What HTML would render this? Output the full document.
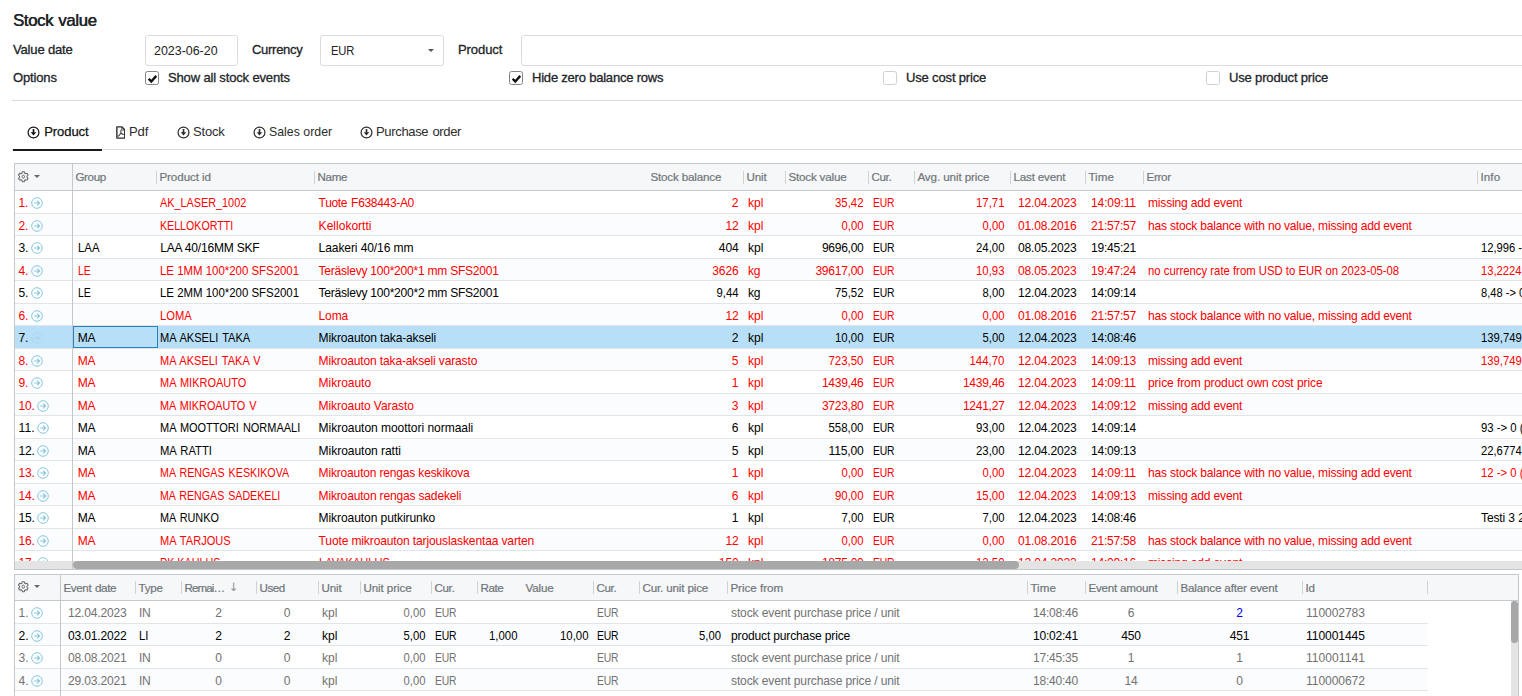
<!DOCTYPE html>
<html lang="en"><head><meta charset="utf-8"><title>Stock value</title>
<style>
html,body{margin:0;padding:0;background:#fff;}
body{width:1522px;height:696px;overflow:hidden;position:relative;font-family:"Liberation Sans",sans-serif;font-size:12.06px;color:#000;}
.abs{position:absolute;white-space:nowrap;}
.title{left:13px;top:11px;font-size:16.77px;line-height:19px;color:#212529;-webkit-text-stroke:.2px #212529;text-shadow:.3px 0 0 #212529;}
.lbl{font-size:13.04px;line-height:15px;color:#212529;-webkit-text-stroke:.3px #212529;}
.inp{border:1px solid #dcdcdc;border-radius:3px;box-sizing:border-box;height:31px;top:35px;background:#fff;}
.inp span{position:absolute;left:8.4px;top:7px;font-size:13.04px;line-height:15px;color:#222;}
.cb{width:14px;height:14px;box-sizing:border-box;border:1px solid #858585;border-radius:2.5px;background:#fff;top:71px;}
.cb.off{border-color:#d0d0d0;}
.cb svg{position:absolute;left:.5px;top:.5px;width:11.2px;height:11.2px;}
.hr{left:12px;right:0;top:100px;height:1px;background:#dcdcdc;}
.tabline{left:12px;right:0;top:149px;height:1px;background:#dcdcdc;}
.tabact{left:13px;width:89px;top:149px;height:2px;background:#1a1a1a;}
.tab{top:123.8px;font-size:13.04px;line-height:15px;color:#2c2c2c;}
.tab.on{color:#111;-webkit-text-stroke:.25px #111;}
.ti{position:absolute;width:13px;height:13px;top:1.9px;}
.tp{position:absolute;width:9.6px;height:13px;top:1.9px;}
.grid{border:1px solid #c3c8cc;box-sizing:border-box;overflow:hidden;background:#fff;}
.gh{left:0;top:0;right:0;background:#f6f7f8;border-bottom:1px solid #c3c8cc;}
.hc{top:0;font-size:11.64px;color:#6f757a;-webkit-text-stroke:.2px #6f757a;}
.sep{width:1px;height:13px;background:#cfd3d7;}
.row{left:0;right:0;height:22.5px;box-sizing:border-box;border-bottom:1px solid #e2e5e8;}
.row.alt{background:#fbfcfe;}
.row.sel{background:#b8dff8;}
.c{top:1.2px;height:21px;line-height:22px;}
.red{color:#ff0000;}
.gray{color:#727272;}
.go{position:absolute;width:12px;height:12px;top:6.4px;color:#86c6dc;}
.gear{position:absolute;width:12.6px;height:13.4px;}
.v0{top:0;width:1px;background:#c3c8cc;}
</style></head>
<body>
<div class="abs title" style="letter-spacing:-0.364px;word-spacing:0.88px;">Stock value</div>
<div class="abs lbl" style="left:13px;top:41.75px;letter-spacing:-0.18px;">Value date</div>
<div class="abs inp" style="left:145px;width:93px"><span style="transform:scaleX(0.954);transform-origin:0 0;">2023-06-20</span></div>
<div class="abs lbl" style="left:252px;top:41.75px;letter-spacing:-0.295px;">Currency</div>
<div class="abs inp" style="left:320px;width:124px"><span style="left:10px;transform:scaleX(0.86);transform-origin:0 0;letter-spacing:-0.221px;">EUR</span><i class="abs" style="left:107px;top:13px;border:3.5px solid transparent;border-top:3.5px solid #555;border-bottom:0;"></i></div>
<div class="abs lbl" style="left:458px;top:41.75px;letter-spacing:-0.083px;">Product</div>
<div class="abs inp" style="left:521px;width:1020px"></div>
<div class="abs lbl" style="left:13px;top:69.75px;letter-spacing:-0.161px;">Options</div>
<div class="abs cb" style="left:145px"><svg viewBox="0 0 11 11"><path d="M1.6 5.7l2.600 2.600 4.900-5.500" fill="none" stroke="#111" stroke-width="2.3"/></svg></div>
<div class="abs lbl" style="left:168px;top:69.75px;letter-spacing:-0.167px;">Show all stock events</div>
<div class="abs cb" style="left:509px"><svg viewBox="0 0 11 11"><path d="M1.6 5.7l2.600 2.600 4.900-5.500" fill="none" stroke="#111" stroke-width="2.3"/></svg></div>
<div class="abs lbl" style="left:532px;top:69.75px;letter-spacing:-0.224px;">Hide zero balance rows</div>
<div class="abs cb off" style="left:883px"></div>
<div class="abs lbl" style="left:906px;top:69.75px;letter-spacing:-0.17px;">Use cost price</div>
<div class="abs cb off" style="left:1206px"></div>
<div class="abs lbl" style="left:1229px;top:69.75px;letter-spacing:-0.174px;">Use product price</div>
<div class="abs hr"></div>
<div class="abs tabline"></div><div class="abs tabact"></div>
<div class="abs tab on" style="left:26.8px"><svg class="ti" viewBox="0 0 14 14"><circle cx="7" cy="7" r="5.85" fill="none" stroke="currentColor" stroke-width="1.3"/><path d="M7 3.3v4.500" fill="none" stroke="currentColor" stroke-width="1.8"/><path d="M4 6.700L7 10.100l3-3.400z" fill="currentColor"/></svg><span style="position:absolute;left:17.4px;letter-spacing:-0.083px;">Product</span></div>
<div class="abs tab" style="left:115.6px"><svg class="tp" viewBox="0 0 10 13.5"><path d="M.9.900h5.300l2.900 2.900v8.800H.9z" fill="none" stroke="currentColor" stroke-width="1.45" stroke-linejoin="round"/><path d="M6 1.200v3h3" fill="none" stroke="currentColor" stroke-width=".8"/><path d="M5.100 4.400v3.300M5.100 7.500L2.500 10.600M5.100 7.500l2.600 1.400" fill="none" stroke="currentColor" stroke-width="1.050" stroke-linecap="round"/></svg><span style="position:absolute;left:13.4px;letter-spacing:-0.068px;">Pdf</span></div>
<div class="abs tab" style="left:176.8px"><svg class="ti" viewBox="0 0 14 14"><circle cx="7" cy="7" r="5.85" fill="none" stroke="currentColor" stroke-width="1.3"/><path d="M7 3.3v4.500" fill="none" stroke="currentColor" stroke-width="1.8"/><path d="M4 6.700L7 10.100l3-3.400z" fill="currentColor"/></svg><span style="position:absolute;left:16.2px;letter-spacing:-0.191px;">Stock</span></div>
<div class="abs tab" style="left:252.8px"><svg class="ti" viewBox="0 0 14 14"><circle cx="7" cy="7" r="5.85" fill="none" stroke="currentColor" stroke-width="1.3"/><path d="M7 3.3v4.500" fill="none" stroke="currentColor" stroke-width="1.8"/><path d="M4 6.700L7 10.100l3-3.400z" fill="currentColor"/></svg><span style="position:absolute;left:16.2px;transform:scaleX(0.947);transform-origin:0 0;">Sales order</span></div>
<div class="abs tab" style="left:359.8px"><svg class="ti" viewBox="0 0 14 14"><circle cx="7" cy="7" r="5.85" fill="none" stroke="currentColor" stroke-width="1.3"/><path d="M7 3.3v4.500" fill="none" stroke="currentColor" stroke-width="1.8"/><path d="M4 6.700L7 10.100l3-3.400z" fill="currentColor"/></svg><span style="position:absolute;left:16.2px;letter-spacing:-0.349px;word-spacing:0.89px;">Purchase order</span></div>
<div class="abs grid" id="g1" style="left:14px;top:163px;width:1540px;height:407px">
<div class="abs gh" style="height:26px">
<svg class="gear" style="left:2.4px;top:5.8px" viewBox="0 0 24 24"><path fill="none" stroke="#6a6a6a" stroke-width="2" stroke-linejoin="round" d="M10 2.5h4l.6 2.8 1.9 1.1 2.7-.9 2 3.5-2.1 1.9v2.2l2.1 1.9-2 3.5-2.7-.9-1.9 1.1-.6 2.8h-4l-.6-2.8-1.9-1.1-2.7.9-2-3.5 2.1-1.9v-2.2L2.8 9l2-3.5 2.7.9 1.9-1.1z"/><ellipse cx="12" cy="12" rx="2.300" ry="3" fill="none" stroke="#6a6a6a" stroke-width="1.900"/></svg><i class="abs" style="left:18.5px;top:10.7px;border:3.5px solid transparent;border-top:3.5px solid #686868;border-bottom:0;"></i>
<div class="abs hc" style="left:60.4px;height:26px;line-height:26px;letter-spacing:-0.369px;">Group</div>
<i class="abs sep" style="left:141px;top:7px"></i>
<div class="abs hc" style="left:144.4px;height:26px;line-height:26px;letter-spacing:-0.072px;">Product id</div>
<i class="abs sep" style="left:299px;top:7px"></i>
<div class="abs hc" style="left:302.4px;height:26px;line-height:26px;letter-spacing:-0.285px;">Name</div>
<div class="abs hc" style="left:635.4px;height:26px;line-height:26px;letter-spacing:-0.169px;">Stock balance</div>
<i class="abs sep" style="left:728px;top:7px"></i>
<div class="abs hc" style="left:731.4px;height:26px;line-height:26px;letter-spacing:-0.109px;">Unit</div>
<i class="abs sep" style="left:770px;top:7px"></i>
<div class="abs hc" style="left:773.4px;height:26px;line-height:26px;letter-spacing:-0.186px;">Stock value</div>
<i class="abs sep" style="left:853px;top:7px"></i>
<div class="abs hc" style="left:856.4px;height:26px;line-height:26px;letter-spacing:-0.348px;">Cur.</div>
<i class="abs sep" style="left:899px;top:7px"></i>
<div class="abs hc" style="left:902.4px;height:26px;line-height:26px;letter-spacing:-0.097px;">Avg. unit price</div>
<i class="abs sep" style="left:995px;top:7px"></i>
<div class="abs hc" style="left:998.4px;height:26px;line-height:26px;letter-spacing:-0.167px;">Last event</div>
<i class="abs sep" style="left:1070px;top:7px"></i>
<div class="abs hc" style="left:1073.4px;height:26px;line-height:26px;letter-spacing:0.039px;">Time</div>
<i class="abs sep" style="left:1128px;top:7px"></i>
<div class="abs hc" style="left:1131.4px;height:26px;line-height:26px;letter-spacing:-0.263px;">Error</div>
<i class="abs sep" style="left:1462px;top:7px"></i>
<div class="abs hc" style="left:1465.4px;height:26px;line-height:26px;letter-spacing:0.105px;">Info</div>
</div>
<div class="abs row red" style="top:27.0px">
<div class="abs c" style="left:3.6px;letter-spacing:-0.219px;">1.</div>
<svg class="go" style="left:15.9px" viewBox="0 0 12 12"><circle cx="6" cy="6" r="5.3" fill="none" stroke="currentColor" stroke-width="1"/><path d="M3.2 6h5.2M6.2 3.7L8.5 6 6.2 8.3" fill="none" stroke="currentColor" stroke-width="1.15"/></svg>
<div class="abs c" style="left:145.2px;transform:scaleX(0.9);transform-origin:0 0;">AK_LASER_1002</div>
<div class="abs c" style="left:303.6px;letter-spacing:-0.346px;word-spacing:0.89px;">Tuote F638443-A0</div>
<div class="abs c" style="left:632px;width:91.5px;text-align:right;">2</div>
<div class="abs c" style="left:733px;letter-spacing:-0.042px;">kpl</div>
<div class="abs c" style="left:770px;width:78.5px;text-align:right;transform:scaleX(0.944);transform-origin:100% 0;">35,42</div>
<div class="abs c" style="left:858px;transform:scaleX(0.86);transform-origin:0 0;letter-spacing:-0.206px;">EUR</div>
<div class="abs c" style="left:899px;width:90.5px;text-align:right;transform:scaleX(0.944);transform-origin:100% 0;">17,71</div>
<div class="abs c" style="left:1003px;letter-spacing:-0.181px;">12.04.2023</div>
<div class="abs c" style="left:1076px;letter-spacing:-0.137px;">14:09:11</div>
<div class="abs c" style="left:1133px;letter-spacing:-0.173px;">missing add event</div>
</div>
<div class="abs row alt red" style="top:49.5px">
<div class="abs c" style="left:3.6px;letter-spacing:-0.219px;">2.</div>
<svg class="go" style="left:15.9px" viewBox="0 0 12 12"><circle cx="6" cy="6" r="5.3" fill="none" stroke="currentColor" stroke-width="1"/><path d="M3.2 6h5.2M6.2 3.7L8.5 6 6.2 8.3" fill="none" stroke="currentColor" stroke-width="1.15"/></svg>
<div class="abs c" style="left:145.2px;transform:scaleX(0.883);transform-origin:0 0;">KELLOKORTTI</div>
<div class="abs c" style="left:303.6px;">Kellokortti</div>
<div class="abs c" style="left:632px;width:91.5px;text-align:right;letter-spacing:-0.156px;">12</div>
<div class="abs c" style="left:733px;letter-spacing:-0.042px;">kpl</div>
<div class="abs c" style="left:770px;width:78.5px;text-align:right;transform:scaleX(0.935);transform-origin:100% 0;">0,00</div>
<div class="abs c" style="left:858px;transform:scaleX(0.86);transform-origin:0 0;letter-spacing:-0.206px;">EUR</div>
<div class="abs c" style="left:899px;width:90.5px;text-align:right;transform:scaleX(0.935);transform-origin:100% 0;">0,00</div>
<div class="abs c" style="left:1003px;letter-spacing:-0.181px;">01.08.2016</div>
<div class="abs c" style="left:1076px;letter-spacing:-0.25px;">21:57:57</div>
<div class="abs c" style="left:1133px;letter-spacing:-0.203px;">has stock balance with no value, missing add event</div>
</div>
<div class="abs row" style="top:72.0px">
<div class="abs c" style="left:3.6px;letter-spacing:-0.219px;">3.</div>
<svg class="go" style="left:15.9px" viewBox="0 0 12 12"><circle cx="6" cy="6" r="5.3" fill="none" stroke="currentColor" stroke-width="1"/><path d="M3.2 6h5.2M6.2 3.7L8.5 6 6.2 8.3" fill="none" stroke="currentColor" stroke-width="1.15"/></svg>
<div class="abs c" style="left:62.7px;transform:scaleX(0.947);transform-origin:0 0;">LAA</div>
<div class="abs c" style="left:145.2px;letter-spacing:-0.21px;">LAA 40/16MM SKF</div>
<div class="abs c" style="left:303.6px;letter-spacing:-0.1px;">Laakeri 40/16 mm</div>
<div class="abs c" style="left:632px;width:91.5px;text-align:right;letter-spacing:-0.156px;">404</div>
<div class="abs c" style="left:733px;letter-spacing:-0.042px;">kpl</div>
<div class="abs c" style="left:770px;width:78.5px;text-align:right;letter-spacing:-0.286px;">9696,00</div>
<div class="abs c" style="left:858px;transform:scaleX(0.86);transform-origin:0 0;letter-spacing:-0.206px;">EUR</div>
<div class="abs c" style="left:899px;width:90.5px;text-align:right;transform:scaleX(0.944);transform-origin:100% 0;">24,00</div>
<div class="abs c" style="left:1003px;letter-spacing:-0.181px;">08.05.2023</div>
<div class="abs c" style="left:1076px;letter-spacing:-0.25px;">19:45:21</div>
<div class="abs c" style="left:1466px;transform:scaleX(0.929);transform-origin:0 0;">12,996 -&gt; 24</div>
</div>
<div class="abs row alt red" style="top:94.5px">
<div class="abs c" style="left:3.6px;letter-spacing:-0.219px;">4.</div>
<svg class="go" style="left:15.9px" viewBox="0 0 12 12"><circle cx="6" cy="6" r="5.3" fill="none" stroke="currentColor" stroke-width="1"/><path d="M3.2 6h5.2M6.2 3.7L8.5 6 6.2 8.3" fill="none" stroke="currentColor" stroke-width="1.15"/></svg>
<div class="abs c" style="left:62.7px;transform:scaleX(0.874);transform-origin:0 0;">LE</div>
<div class="abs c" style="left:145.2px;transform:scaleX(0.948);transform-origin:0 0;">LE 1MM 100*200 SFS2001</div>
<div class="abs c" style="left:303.6px;letter-spacing:-0.249px;">Teräslevy 100*200*1 mm SFS2001</div>
<div class="abs c" style="left:632px;width:91.5px;text-align:right;letter-spacing:-0.16px;">3626</div>
<div class="abs c" style="left:733px;letter-spacing:-0.203px;">kg</div>
<div class="abs c" style="left:770px;width:78.5px;text-align:right;letter-spacing:-0.27px;">39617,00</div>
<div class="abs c" style="left:858px;transform:scaleX(0.86);transform-origin:0 0;letter-spacing:-0.206px;">EUR</div>
<div class="abs c" style="left:899px;width:90.5px;text-align:right;transform:scaleX(0.944);transform-origin:100% 0;">10,93</div>
<div class="abs c" style="left:1003px;letter-spacing:-0.181px;">08.05.2023</div>
<div class="abs c" style="left:1076px;letter-spacing:-0.25px;">19:47:24</div>
<div class="abs c" style="left:1133px;transform:scaleX(0.94);transform-origin:0 0;">no currency rate from USD to EUR on 2023-05-08</div>
<div class="abs c" style="left:1466px;transform:scaleX(0.931);transform-origin:0 0;">13,2224 -&gt; 10,93</div>
</div>
<div class="abs row" style="top:117.0px">
<div class="abs c" style="left:3.6px;letter-spacing:-0.219px;">5.</div>
<svg class="go" style="left:15.9px" viewBox="0 0 12 12"><circle cx="6" cy="6" r="5.3" fill="none" stroke="currentColor" stroke-width="1"/><path d="M3.2 6h5.2M6.2 3.7L8.5 6 6.2 8.3" fill="none" stroke="currentColor" stroke-width="1.15"/></svg>
<div class="abs c" style="left:62.7px;transform:scaleX(0.874);transform-origin:0 0;">LE</div>
<div class="abs c" style="left:145.2px;transform:scaleX(0.948);transform-origin:0 0;">LE 2MM 100*200 SFS2001</div>
<div class="abs c" style="left:303.6px;letter-spacing:-0.249px;">Teräslevy 100*200*2 mm SFS2001</div>
<div class="abs c" style="left:632px;width:91.5px;text-align:right;transform:scaleX(0.935);transform-origin:100% 0;">9,44</div>
<div class="abs c" style="left:733px;letter-spacing:-0.203px;">kg</div>
<div class="abs c" style="left:770px;width:78.5px;text-align:right;transform:scaleX(0.944);transform-origin:100% 0;">75,52</div>
<div class="abs c" style="left:858px;transform:scaleX(0.86);transform-origin:0 0;letter-spacing:-0.206px;">EUR</div>
<div class="abs c" style="left:899px;width:90.5px;text-align:right;transform:scaleX(0.935);transform-origin:100% 0;">8,00</div>
<div class="abs c" style="left:1003px;letter-spacing:-0.181px;">12.04.2023</div>
<div class="abs c" style="left:1076px;letter-spacing:-0.25px;">14:09:14</div>
<div class="abs c" style="left:1466px;transform:scaleX(0.925);transform-origin:0 0;">8,48 -&gt; 0 (8)</div>
</div>
<div class="abs row alt red" style="top:139.5px">
<div class="abs c" style="left:3.6px;letter-spacing:-0.219px;">6.</div>
<svg class="go" style="left:15.9px" viewBox="0 0 12 12"><circle cx="6" cy="6" r="5.3" fill="none" stroke="currentColor" stroke-width="1"/><path d="M3.2 6h5.2M6.2 3.7L8.5 6 6.2 8.3" fill="none" stroke="currentColor" stroke-width="1.15"/></svg>
<div class="abs c" style="left:145.2px;transform:scaleX(0.93);transform-origin:0 0;">LOMA</div>
<div class="abs c" style="left:303.6px;letter-spacing:-0.172px;">Loma</div>
<div class="abs c" style="left:632px;width:91.5px;text-align:right;letter-spacing:-0.156px;">12</div>
<div class="abs c" style="left:733px;letter-spacing:-0.042px;">kpl</div>
<div class="abs c" style="left:770px;width:78.5px;text-align:right;transform:scaleX(0.935);transform-origin:100% 0;">0,00</div>
<div class="abs c" style="left:858px;transform:scaleX(0.86);transform-origin:0 0;letter-spacing:-0.206px;">EUR</div>
<div class="abs c" style="left:899px;width:90.5px;text-align:right;transform:scaleX(0.935);transform-origin:100% 0;">0,00</div>
<div class="abs c" style="left:1003px;letter-spacing:-0.181px;">01.08.2016</div>
<div class="abs c" style="left:1076px;letter-spacing:-0.25px;">21:57:57</div>
<div class="abs c" style="left:1133px;letter-spacing:-0.203px;">has stock balance with no value, missing add event</div>
</div>
<div class="abs row sel" style="top:162.0px">
<div class="abs c" style="left:3.6px;letter-spacing:-0.219px;">7.</div>
<svg class="go" style="left:15.9px;opacity:.3" viewBox="0 0 12 12"><circle cx="6" cy="6" r="5.3" fill="none" stroke="currentColor" stroke-width="1"/><path d="M3.2 6h5.2M6.2 3.7L8.5 6 6.2 8.3" fill="none" stroke="currentColor" stroke-width="1.15"/></svg>
<div class="abs c" style="left:62.7px;letter-spacing:-0.109px;">MA</div>
<div class="abs c" style="left:145.2px;transform:scaleX(0.919);transform-origin:0 0;word-spacing:1.1px;">MA AKSELI TAKA</div>
<div class="abs c" style="left:303.6px;letter-spacing:-0.141px;">Mikroauton taka-akseli</div>
<div class="abs c" style="left:632px;width:91.5px;text-align:right;">2</div>
<div class="abs c" style="left:733px;letter-spacing:-0.042px;">kpl</div>
<div class="abs c" style="left:770px;width:78.5px;text-align:right;transform:scaleX(0.944);transform-origin:100% 0;">10,00</div>
<div class="abs c" style="left:858px;transform:scaleX(0.86);transform-origin:0 0;letter-spacing:-0.206px;">EUR</div>
<div class="abs c" style="left:899px;width:90.5px;text-align:right;transform:scaleX(0.935);transform-origin:100% 0;">5,00</div>
<div class="abs c" style="left:1003px;letter-spacing:-0.181px;">12.04.2023</div>
<div class="abs c" style="left:1076px;letter-spacing:-0.25px;">14:08:46</div>
<div class="abs c" style="left:1466px;transform:scaleX(0.933);transform-origin:0 0;">139,7495 -&gt; 5</div>
<i class="abs" style="left:58px;top:0;width:84.5px;height:21.5px;box-sizing:border-box;border:1px solid #2a7fc0"></i>
</div>
<div class="abs row alt red" style="top:184.5px">
<div class="abs c" style="left:3.6px;letter-spacing:-0.219px;">8.</div>
<svg class="go" style="left:15.9px" viewBox="0 0 12 12"><circle cx="6" cy="6" r="5.3" fill="none" stroke="currentColor" stroke-width="1"/><path d="M3.2 6h5.2M6.2 3.7L8.5 6 6.2 8.3" fill="none" stroke="currentColor" stroke-width="1.15"/></svg>
<div class="abs c" style="left:62.7px;letter-spacing:-0.109px;">MA</div>
<div class="abs c" style="left:145.2px;transform:scaleX(0.914);transform-origin:0 0;word-spacing:1.1px;">MA AKSELI TAKA V</div>
<div class="abs c" style="left:303.6px;letter-spacing:-0.159px;">Mikroauton taka-akseli varasto</div>
<div class="abs c" style="left:632px;width:91.5px;text-align:right;">5</div>
<div class="abs c" style="left:733px;letter-spacing:-0.042px;">kpl</div>
<div class="abs c" style="left:770px;width:78.5px;text-align:right;transform:scaleX(0.95);transform-origin:100% 0;">723,50</div>
<div class="abs c" style="left:858px;transform:scaleX(0.86);transform-origin:0 0;letter-spacing:-0.206px;">EUR</div>
<div class="abs c" style="left:899px;width:90.5px;text-align:right;transform:scaleX(0.95);transform-origin:100% 0;">144,70</div>
<div class="abs c" style="left:1003px;letter-spacing:-0.181px;">12.04.2023</div>
<div class="abs c" style="left:1076px;letter-spacing:-0.25px;">14:09:13</div>
<div class="abs c" style="left:1133px;letter-spacing:-0.173px;">missing add event</div>
<div class="abs c" style="left:1466px;transform:scaleX(0.934);transform-origin:0 0;">139,7495 -&gt; 144,7</div>
</div>
<div class="abs row red" style="top:207.0px">
<div class="abs c" style="left:3.6px;letter-spacing:-0.219px;">9.</div>
<svg class="go" style="left:15.9px" viewBox="0 0 12 12"><circle cx="6" cy="6" r="5.3" fill="none" stroke="currentColor" stroke-width="1"/><path d="M3.2 6h5.2M6.2 3.7L8.5 6 6.2 8.3" fill="none" stroke="currentColor" stroke-width="1.15"/></svg>
<div class="abs c" style="left:62.7px;letter-spacing:-0.109px;">MA</div>
<div class="abs c" style="left:145.2px;transform:scaleX(0.912);transform-origin:0 0;word-spacing:1.1px;">MA MIKROAUTO</div>
<div class="abs c" style="left:303.6px;letter-spacing:-0.05px;">Mikroauto</div>
<div class="abs c" style="left:632px;width:91.5px;text-align:right;">1</div>
<div class="abs c" style="left:733px;letter-spacing:-0.042px;">kpl</div>
<div class="abs c" style="left:770px;width:78.5px;text-align:right;letter-spacing:-0.286px;">1439,46</div>
<div class="abs c" style="left:858px;transform:scaleX(0.86);transform-origin:0 0;letter-spacing:-0.206px;">EUR</div>
<div class="abs c" style="left:899px;width:90.5px;text-align:right;letter-spacing:-0.286px;">1439,46</div>
<div class="abs c" style="left:1003px;letter-spacing:-0.181px;">12.04.2023</div>
<div class="abs c" style="left:1076px;letter-spacing:-0.137px;">14:09:11</div>
<div class="abs c" style="left:1133px;letter-spacing:-0.087px;">price from product own cost price</div>
</div>
<div class="abs row alt red" style="top:229.5px">
<div class="abs c" style="left:3.6px;letter-spacing:-0.198px;">10.</div>
<svg class="go" style="left:22.4px" viewBox="0 0 12 12"><circle cx="6" cy="6" r="5.3" fill="none" stroke="currentColor" stroke-width="1"/><path d="M3.2 6h5.2M6.2 3.7L8.5 6 6.2 8.3" fill="none" stroke="currentColor" stroke-width="1.15"/></svg>
<div class="abs c" style="left:62.7px;letter-spacing:-0.109px;">MA</div>
<div class="abs c" style="left:145.2px;transform:scaleX(0.902);transform-origin:0 0;word-spacing:1.1px;">MA MIKROAUTO V</div>
<div class="abs c" style="left:303.6px;letter-spacing:-0.097px;">Mikroauto Varasto</div>
<div class="abs c" style="left:632px;width:91.5px;text-align:right;">3</div>
<div class="abs c" style="left:733px;letter-spacing:-0.042px;">kpl</div>
<div class="abs c" style="left:770px;width:78.5px;text-align:right;letter-spacing:-0.286px;">3723,80</div>
<div class="abs c" style="left:858px;transform:scaleX(0.86);transform-origin:0 0;letter-spacing:-0.206px;">EUR</div>
<div class="abs c" style="left:899px;width:90.5px;text-align:right;letter-spacing:-0.286px;">1241,27</div>
<div class="abs c" style="left:1003px;letter-spacing:-0.181px;">12.04.2023</div>
<div class="abs c" style="left:1076px;letter-spacing:-0.25px;">14:09:12</div>
<div class="abs c" style="left:1133px;letter-spacing:-0.173px;">missing add event</div>
</div>
<div class="abs row" style="top:252.0px">
<div class="abs c" style="left:3.6px;letter-spacing:0.099px;">11.</div>
<svg class="go" style="left:22.4px" viewBox="0 0 12 12"><circle cx="6" cy="6" r="5.3" fill="none" stroke="currentColor" stroke-width="1"/><path d="M3.2 6h5.2M6.2 3.7L8.5 6 6.2 8.3" fill="none" stroke="currentColor" stroke-width="1.15"/></svg>
<div class="abs c" style="left:62.7px;letter-spacing:-0.109px;">MA</div>
<div class="abs c" style="left:145.2px;transform:scaleX(0.911);transform-origin:0 0;word-spacing:1.1px;">MA MOOTTORI NORMAALI</div>
<div class="abs c" style="left:303.6px;letter-spacing:-0.05px;">Mikroauton moottori normaali</div>
<div class="abs c" style="left:632px;width:91.5px;text-align:right;">6</div>
<div class="abs c" style="left:733px;letter-spacing:-0.042px;">kpl</div>
<div class="abs c" style="left:770px;width:78.5px;text-align:right;transform:scaleX(0.95);transform-origin:100% 0;">558,00</div>
<div class="abs c" style="left:858px;transform:scaleX(0.86);transform-origin:0 0;letter-spacing:-0.206px;">EUR</div>
<div class="abs c" style="left:899px;width:90.5px;text-align:right;transform:scaleX(0.944);transform-origin:100% 0;">93,00</div>
<div class="abs c" style="left:1003px;letter-spacing:-0.181px;">12.04.2023</div>
<div class="abs c" style="left:1076px;letter-spacing:-0.25px;">14:09:14</div>
<div class="abs c" style="left:1466px;transform:scaleX(0.938);transform-origin:0 0;">93 -&gt; 0 (93)</div>
</div>
<div class="abs row alt" style="top:274.5px">
<div class="abs c" style="left:3.6px;letter-spacing:-0.198px;">12.</div>
<svg class="go" style="left:22.4px" viewBox="0 0 12 12"><circle cx="6" cy="6" r="5.3" fill="none" stroke="currentColor" stroke-width="1"/><path d="M3.2 6h5.2M6.2 3.7L8.5 6 6.2 8.3" fill="none" stroke="currentColor" stroke-width="1.15"/></svg>
<div class="abs c" style="left:62.7px;letter-spacing:-0.109px;">MA</div>
<div class="abs c" style="left:145.2px;transform:scaleX(0.931);transform-origin:0 0;word-spacing:1.1px;">MA RATTI</div>
<div class="abs c" style="left:303.6px;letter-spacing:-0.048px;">Mikroauton ratti</div>
<div class="abs c" style="left:632px;width:91.5px;text-align:right;">5</div>
<div class="abs c" style="left:733px;letter-spacing:-0.042px;">kpl</div>
<div class="abs c" style="left:770px;width:78.5px;text-align:right;letter-spacing:-0.156px;">115,00</div>
<div class="abs c" style="left:858px;transform:scaleX(0.86);transform-origin:0 0;letter-spacing:-0.206px;">EUR</div>
<div class="abs c" style="left:899px;width:90.5px;text-align:right;transform:scaleX(0.944);transform-origin:100% 0;">23,00</div>
<div class="abs c" style="left:1003px;letter-spacing:-0.181px;">12.04.2023</div>
<div class="abs c" style="left:1076px;letter-spacing:-0.25px;">14:09:13</div>
<div class="abs c" style="left:1466px;transform:scaleX(0.933);transform-origin:0 0;">22,6774 -&gt; 23</div>
</div>
<div class="abs row red" style="top:297.0px">
<div class="abs c" style="left:3.6px;letter-spacing:-0.198px;">13.</div>
<svg class="go" style="left:22.4px" viewBox="0 0 12 12"><circle cx="6" cy="6" r="5.3" fill="none" stroke="currentColor" stroke-width="1"/><path d="M3.2 6h5.2M6.2 3.7L8.5 6 6.2 8.3" fill="none" stroke="currentColor" stroke-width="1.15"/></svg>
<div class="abs c" style="left:62.7px;letter-spacing:-0.109px;">MA</div>
<div class="abs c" style="left:145.2px;transform:scaleX(0.889);transform-origin:0 0;word-spacing:1.1px;">MA RENGAS KESKIKOVA</div>
<div class="abs c" style="left:303.6px;letter-spacing:-0.186px;">Mikroauton rengas keskikova</div>
<div class="abs c" style="left:632px;width:91.5px;text-align:right;">1</div>
<div class="abs c" style="left:733px;letter-spacing:-0.042px;">kpl</div>
<div class="abs c" style="left:770px;width:78.5px;text-align:right;transform:scaleX(0.935);transform-origin:100% 0;">0,00</div>
<div class="abs c" style="left:858px;transform:scaleX(0.86);transform-origin:0 0;letter-spacing:-0.206px;">EUR</div>
<div class="abs c" style="left:899px;width:90.5px;text-align:right;transform:scaleX(0.935);transform-origin:100% 0;">0,00</div>
<div class="abs c" style="left:1003px;letter-spacing:-0.181px;">12.04.2023</div>
<div class="abs c" style="left:1076px;letter-spacing:-0.137px;">14:09:11</div>
<div class="abs c" style="left:1133px;letter-spacing:-0.203px;">has stock balance with no value, missing add event</div>
<div class="abs c" style="left:1466px;transform:scaleX(0.938);transform-origin:0 0;">12 -&gt; 0 (12)</div>
</div>
<div class="abs row alt red" style="top:319.5px">
<div class="abs c" style="left:3.6px;letter-spacing:-0.198px;">14.</div>
<svg class="go" style="left:22.4px" viewBox="0 0 12 12"><circle cx="6" cy="6" r="5.3" fill="none" stroke="currentColor" stroke-width="1"/><path d="M3.2 6h5.2M6.2 3.7L8.5 6 6.2 8.3" fill="none" stroke="currentColor" stroke-width="1.15"/></svg>
<div class="abs c" style="left:62.7px;letter-spacing:-0.109px;">MA</div>
<div class="abs c" style="left:145.2px;transform:scaleX(0.884);transform-origin:0 0;word-spacing:1.1px;">MA RENGAS SADEKELI</div>
<div class="abs c" style="left:303.6px;letter-spacing:-0.179px;">Mikroauton rengas sadekeli</div>
<div class="abs c" style="left:632px;width:91.5px;text-align:right;">6</div>
<div class="abs c" style="left:733px;letter-spacing:-0.042px;">kpl</div>
<div class="abs c" style="left:770px;width:78.5px;text-align:right;transform:scaleX(0.944);transform-origin:100% 0;">90,00</div>
<div class="abs c" style="left:858px;transform:scaleX(0.86);transform-origin:0 0;letter-spacing:-0.206px;">EUR</div>
<div class="abs c" style="left:899px;width:90.5px;text-align:right;transform:scaleX(0.944);transform-origin:100% 0;">15,00</div>
<div class="abs c" style="left:1003px;letter-spacing:-0.181px;">12.04.2023</div>
<div class="abs c" style="left:1076px;letter-spacing:-0.25px;">14:09:13</div>
<div class="abs c" style="left:1133px;letter-spacing:-0.173px;">missing add event</div>
</div>
<div class="abs row" style="top:342.0px">
<div class="abs c" style="left:3.6px;letter-spacing:-0.198px;">15.</div>
<svg class="go" style="left:22.4px" viewBox="0 0 12 12"><circle cx="6" cy="6" r="5.3" fill="none" stroke="currentColor" stroke-width="1"/><path d="M3.2 6h5.2M6.2 3.7L8.5 6 6.2 8.3" fill="none" stroke="currentColor" stroke-width="1.15"/></svg>
<div class="abs c" style="left:62.7px;letter-spacing:-0.109px;">MA</div>
<div class="abs c" style="left:145.2px;transform:scaleX(0.901);transform-origin:0 0;word-spacing:1.1px;">MA RUNKO</div>
<div class="abs c" style="left:303.6px;letter-spacing:-0.092px;">Mikroauton putkirunko</div>
<div class="abs c" style="left:632px;width:91.5px;text-align:right;">1</div>
<div class="abs c" style="left:733px;letter-spacing:-0.042px;">kpl</div>
<div class="abs c" style="left:770px;width:78.5px;text-align:right;transform:scaleX(0.935);transform-origin:100% 0;">7,00</div>
<div class="abs c" style="left:858px;transform:scaleX(0.86);transform-origin:0 0;letter-spacing:-0.206px;">EUR</div>
<div class="abs c" style="left:899px;width:90.5px;text-align:right;transform:scaleX(0.935);transform-origin:100% 0;">7,00</div>
<div class="abs c" style="left:1003px;letter-spacing:-0.181px;">12.04.2023</div>
<div class="abs c" style="left:1076px;letter-spacing:-0.25px;">14:08:46</div>
<div class="abs c" style="left:1466px;letter-spacing:-0.129px;">Testi 3 2 1</div>
</div>
<div class="abs row alt red" style="top:364.5px">
<div class="abs c" style="left:3.6px;letter-spacing:-0.198px;">16.</div>
<svg class="go" style="left:22.4px" viewBox="0 0 12 12"><circle cx="6" cy="6" r="5.3" fill="none" stroke="currentColor" stroke-width="1"/><path d="M3.2 6h5.2M6.2 3.7L8.5 6 6.2 8.3" fill="none" stroke="currentColor" stroke-width="1.15"/></svg>
<div class="abs c" style="left:62.7px;letter-spacing:-0.109px;">MA</div>
<div class="abs c" style="left:145.2px;transform:scaleX(0.918);transform-origin:0 0;word-spacing:1.1px;">MA TARJOUS</div>
<div class="abs c" style="left:303.6px;letter-spacing:-0.142px;">Tuote mikroauton tarjouslaskentaa varten</div>
<div class="abs c" style="left:632px;width:91.5px;text-align:right;letter-spacing:-0.156px;">12</div>
<div class="abs c" style="left:733px;letter-spacing:-0.042px;">kpl</div>
<div class="abs c" style="left:770px;width:78.5px;text-align:right;transform:scaleX(0.935);transform-origin:100% 0;">0,00</div>
<div class="abs c" style="left:858px;transform:scaleX(0.86);transform-origin:0 0;letter-spacing:-0.206px;">EUR</div>
<div class="abs c" style="left:899px;width:90.5px;text-align:right;transform:scaleX(0.935);transform-origin:100% 0;">0,00</div>
<div class="abs c" style="left:1003px;letter-spacing:-0.181px;">01.08.2016</div>
<div class="abs c" style="left:1076px;letter-spacing:-0.25px;">21:57:58</div>
<div class="abs c" style="left:1133px;letter-spacing:-0.203px;">has stock balance with no value, missing add event</div>
</div>
<div class="abs row red" style="top:387.0px">
<div class="abs c" style="left:3.6px;letter-spacing:-0.198px;">17.</div>
<svg class="go" style="left:22.4px" viewBox="0 0 12 12"><circle cx="6" cy="6" r="5.3" fill="none" stroke="currentColor" stroke-width="1"/><path d="M3.2 6h5.2M6.2 3.7L8.5 6 6.2 8.3" fill="none" stroke="currentColor" stroke-width="1.15"/></svg>
<div class="abs c" style="left:145.2px;transform:scaleX(0.892);transform-origin:0 0;">PK KAULUS</div>
<div class="abs c" style="left:303.6px;transform:scaleX(0.917);transform-origin:0 0;">LAVAKAULUS</div>
<div class="abs c" style="left:632px;width:91.5px;text-align:right;letter-spacing:-0.156px;">150</div>
<div class="abs c" style="left:733px;letter-spacing:-0.042px;">kpl</div>
<div class="abs c" style="left:770px;width:78.5px;text-align:right;letter-spacing:-0.286px;">1875,00</div>
<div class="abs c" style="left:858px;transform:scaleX(0.86);transform-origin:0 0;letter-spacing:-0.206px;">EUR</div>
<div class="abs c" style="left:899px;width:90.5px;text-align:right;transform:scaleX(0.944);transform-origin:100% 0;">12,50</div>
<div class="abs c" style="left:1003px;letter-spacing:-0.181px;">12.04.2023</div>
<div class="abs c" style="left:1076px;letter-spacing:-0.25px;">14:09:16</div>
<div class="abs c" style="left:1133px;letter-spacing:-0.173px;">missing add event</div>
</div>
<div class="abs" style="left:0;right:0;top:397px;height:8px;background:#e4e4e4;"><i class="abs" style="left:58px;top:0;width:946px;height:8px;border-radius:4px;background:#a8a8a8"></i></div>
<i class="abs v0" style="left:57px;height:407px"></i>
</div>
<div class="abs grid" id="g2" style="left:14px;top:574px;width:1505px;height:140px">
<div class="abs gh" style="height:25px">
<svg class="gear" style="left:2.4px;top:5.3px" viewBox="0 0 24 24"><path fill="none" stroke="#6a6a6a" stroke-width="2" stroke-linejoin="round" d="M10 2.5h4l.6 2.8 1.9 1.1 2.7-.9 2 3.5-2.1 1.9v2.2l2.1 1.9-2 3.5-2.7-.9-1.9 1.1-.6 2.8h-4l-.6-2.8-1.9-1.1-2.7.9-2-3.5 2.1-1.9v-2.2L2.8 9l2-3.5 2.7.9 1.9-1.1z"/><ellipse cx="12" cy="12" rx="2.300" ry="3" fill="none" stroke="#6a6a6a" stroke-width="1.900"/></svg><i class="abs" style="left:18.5px;top:10.2px;border:3.5px solid transparent;border-top:3.5px solid #686868;border-bottom:0;"></i>
<div class="abs hc" style="left:48.4px;height:25px;line-height:25px;letter-spacing:-0.375px;word-spacing:0.89px;">Event date</div>
<i class="abs sep" style="left:120px;top:6px"></i>
<div class="abs hc" style="left:123.4px;height:25px;line-height:25px;letter-spacing:-0.223px;">Type</div>
<i class="abs sep" style="left:166px;top:6px"></i>
<div class="abs hc" style="left:169.4px;height:25px;line-height:25px;letter-spacing:-0.901px;">Remai…<span style="font-family:'DejaVu Sans',sans-serif;font-size:11.5px;letter-spacing:0;-webkit-text-stroke:0;text-shadow:none;color:#8a8f94;position:absolute;left:44.5px;top:-.5px">↓</span></div>
<i class="abs sep" style="left:241px;top:6px"></i>
<div class="abs hc" style="left:244.4px;height:25px;line-height:25px;letter-spacing:-0.402px;">Used</div>
<i class="abs sep" style="left:303px;top:6px"></i>
<div class="abs hc" style="left:306.4px;height:25px;line-height:25px;letter-spacing:-0.109px;">Unit</div>
<i class="abs sep" style="left:345px;top:6px"></i>
<div class="abs hc" style="left:348.4px;height:25px;line-height:25px;letter-spacing:-0.1px;">Unit price</div>
<i class="abs sep" style="left:416px;top:6px"></i>
<div class="abs hc" style="left:419.4px;height:25px;line-height:25px;letter-spacing:-0.348px;">Cur.</div>
<i class="abs sep" style="left:462px;top:6px"></i>
<div class="abs hc" style="left:465.4px;height:25px;line-height:25px;letter-spacing:-0.41px;">Rate</div>
<div class="abs hc" style="left:510.4px;height:25px;line-height:25px;letter-spacing:-0.128px;">Value</div>
<i class="abs sep" style="left:578px;top:6px"></i>
<div class="abs hc" style="left:581.4px;height:25px;line-height:25px;letter-spacing:-0.348px;">Cur.</div>
<i class="abs sep" style="left:624px;top:6px"></i>
<div class="abs hc" style="left:627.4px;height:25px;line-height:25px;letter-spacing:-0.151px;">Cur. unit pice</div>
<i class="abs sep" style="left:712px;top:6px"></i>
<div class="abs hc" style="left:715.4px;height:25px;line-height:25px;letter-spacing:-0.025px;">Price from</div>
<i class="abs sep" style="left:1012px;top:6px"></i>
<div class="abs hc" style="left:1015.4px;height:25px;line-height:25px;letter-spacing:0.039px;">Time</div>
<i class="abs sep" style="left:1070px;top:6px"></i>
<div class="abs hc" style="left:1073.4px;height:25px;line-height:25px;letter-spacing:-0.221px;">Event amount</div>
<i class="abs sep" style="left:1162px;top:6px"></i>
<div class="abs hc" style="left:1165.4px;height:25px;line-height:25px;letter-spacing:-0.16px;">Balance after event</div>
<i class="abs sep" style="left:1287px;top:6px"></i>
<div class="abs hc" style="left:1290.4px;height:25px;line-height:25px;letter-spacing:-0.086px;">Id</div>
<i class="abs sep" style="left:1412px;top:6px"></i>
</div>
<div class="abs row gray" style="top:26.0px;width:1413px;right:auto">
<div class="abs c" style="left:3.6px">1.</div>
<svg class="go" style="left:15.9px" viewBox="0 0 12 12"><circle cx="6" cy="6" r="5.3" fill="none" stroke="currentColor" stroke-width="1"/><path d="M3.2 6h5.2M6.2 3.7L8.5 6 6.2 8.3" fill="none" stroke="currentColor" stroke-width="1.15"/></svg>
<div class="abs c" style="left:53px;letter-spacing:-0.181px;">12.04.2023</div>
<div class="abs c" style="left:124px;letter-spacing:-0.289px;">IN</div>
<div class="abs c" style="left:166px;width:75px;text-align:center;">2</div>
<div class="abs c" style="left:241px;width:62px;text-align:center;">0</div>
<div class="abs c" style="left:307px;letter-spacing:-0.042px;">kpl</div>
<div class="abs c" style="left:345px;width:65.5px;text-align:right;transform:scaleX(0.935);transform-origin:100% 0;">0,00</div>
<div class="abs c" style="left:420px;transform:scaleX(0.86);transform-origin:0 0;letter-spacing:-0.206px;">EUR</div>
<div class="abs c" style="left:582px;transform:scaleX(0.86);transform-origin:0 0;letter-spacing:-0.206px;">EUR</div>
<div class="abs c" style="left:716px;letter-spacing:-0.128px;">stock event purchase price / unit</div>
<div class="abs c" style="left:1018px;letter-spacing:-0.25px;">14:08:46</div>
<div class="abs c" style="left:1070px;width:92px;text-align:center;">6</div>
<div class="abs c" style="left:1162px;width:125px;text-align:center;color:#0000ee;">2</div>
<div class="abs c" style="left:1291px;letter-spacing:-0.057px;">110002783</div>
</div>
<div class="abs row alt" style="top:48.5px;width:1413px;right:auto">
<div class="abs c" style="left:3.6px">2.</div>
<svg class="go" style="left:15.9px" viewBox="0 0 12 12"><circle cx="6" cy="6" r="5.3" fill="none" stroke="currentColor" stroke-width="1"/><path d="M3.2 6h5.2M6.2 3.7L8.5 6 6.2 8.3" fill="none" stroke="currentColor" stroke-width="1.15"/></svg>
<div class="abs c" style="left:53px;letter-spacing:-0.181px;">03.01.2022</div>
<div class="abs c" style="left:124px;transform:scaleX(0.938);transform-origin:0 0;">LI</div>
<div class="abs c" style="left:166px;width:75px;text-align:center;">2</div>
<div class="abs c" style="left:241px;width:62px;text-align:center;">2</div>
<div class="abs c" style="left:307px;letter-spacing:-0.042px;">kpl</div>
<div class="abs c" style="left:345px;width:65.5px;text-align:right;transform:scaleX(0.935);transform-origin:100% 0;">5,00</div>
<div class="abs c" style="left:420px;transform:scaleX(0.86);transform-origin:0 0;letter-spacing:-0.206px;">EUR</div>
<div class="abs c" style="left:462px;width:40.5px;text-align:right;transform:scaleX(0.944);transform-origin:100% 0;">1,000</div>
<div class="abs c" style="left:507px;width:66.5px;text-align:right;transform:scaleX(0.944);transform-origin:100% 0;">10,00</div>
<div class="abs c" style="left:582px;transform:scaleX(0.86);transform-origin:0 0;letter-spacing:-0.206px;">EUR</div>
<div class="abs c" style="left:624px;width:82px;text-align:right;transform:scaleX(0.935);transform-origin:100% 0;">5,00</div>
<div class="abs c" style="left:716px;letter-spacing:-0.158px;">product purchase price</div>
<div class="abs c" style="left:1018px;letter-spacing:-0.25px;">10:02:41</div>
<div class="abs c" style="left:1070px;width:92px;text-align:center;letter-spacing:-0.156px;">450</div>
<div class="abs c" style="left:1162px;width:125px;text-align:center;letter-spacing:-0.156px;">451</div>
<div class="abs c" style="left:1291px;letter-spacing:-0.057px;">110001445</div>
</div>
<div class="abs row gray" style="top:71.0px;width:1413px;right:auto">
<div class="abs c" style="left:3.6px">3.</div>
<svg class="go" style="left:15.9px" viewBox="0 0 12 12"><circle cx="6" cy="6" r="5.3" fill="none" stroke="currentColor" stroke-width="1"/><path d="M3.2 6h5.2M6.2 3.7L8.5 6 6.2 8.3" fill="none" stroke="currentColor" stroke-width="1.15"/></svg>
<div class="abs c" style="left:53px;letter-spacing:-0.181px;">08.08.2021</div>
<div class="abs c" style="left:124px;letter-spacing:-0.289px;">IN</div>
<div class="abs c" style="left:166px;width:75px;text-align:center;">0</div>
<div class="abs c" style="left:241px;width:62px;text-align:center;">0</div>
<div class="abs c" style="left:307px;letter-spacing:-0.042px;">kpl</div>
<div class="abs c" style="left:345px;width:65.5px;text-align:right;transform:scaleX(0.935);transform-origin:100% 0;">0,00</div>
<div class="abs c" style="left:420px;transform:scaleX(0.86);transform-origin:0 0;letter-spacing:-0.206px;">EUR</div>
<div class="abs c" style="left:582px;transform:scaleX(0.86);transform-origin:0 0;letter-spacing:-0.206px;">EUR</div>
<div class="abs c" style="left:716px;letter-spacing:-0.128px;">stock event purchase price / unit</div>
<div class="abs c" style="left:1018px;letter-spacing:-0.25px;">17:45:35</div>
<div class="abs c" style="left:1070px;width:92px;text-align:center;">1</div>
<div class="abs c" style="left:1162px;width:125px;text-align:center;">1</div>
<div class="abs c" style="left:1291px;letter-spacing:0.042px;">110001141</div>
</div>
<div class="abs row alt gray" style="top:93.5px;width:1413px;right:auto">
<div class="abs c" style="left:3.6px">4.</div>
<svg class="go" style="left:15.9px" viewBox="0 0 12 12"><circle cx="6" cy="6" r="5.3" fill="none" stroke="currentColor" stroke-width="1"/><path d="M3.2 6h5.2M6.2 3.7L8.5 6 6.2 8.3" fill="none" stroke="currentColor" stroke-width="1.15"/></svg>
<div class="abs c" style="left:53px;letter-spacing:-0.181px;">29.03.2021</div>
<div class="abs c" style="left:124px;letter-spacing:-0.289px;">IN</div>
<div class="abs c" style="left:166px;width:75px;text-align:center;">0</div>
<div class="abs c" style="left:241px;width:62px;text-align:center;">0</div>
<div class="abs c" style="left:307px;letter-spacing:-0.042px;">kpl</div>
<div class="abs c" style="left:345px;width:65.5px;text-align:right;transform:scaleX(0.935);transform-origin:100% 0;">0,00</div>
<div class="abs c" style="left:420px;transform:scaleX(0.86);transform-origin:0 0;letter-spacing:-0.206px;">EUR</div>
<div class="abs c" style="left:582px;transform:scaleX(0.86);transform-origin:0 0;letter-spacing:-0.206px;">EUR</div>
<div class="abs c" style="left:716px;letter-spacing:-0.128px;">stock event purchase price / unit</div>
<div class="abs c" style="left:1018px;letter-spacing:-0.25px;">18:40:40</div>
<div class="abs c" style="left:1070px;width:92px;text-align:center;letter-spacing:-0.156px;">14</div>
<div class="abs c" style="left:1162px;width:125px;text-align:center;">0</div>
<div class="abs c" style="left:1291px;letter-spacing:-0.057px;">110000672</div>
</div>
<div class="abs row gray" style="top:116.0px;width:1413px;right:auto">
<div class="abs c" style="left:3.6px">5.</div>
<svg class="go" style="left:15.9px" viewBox="0 0 12 12"><circle cx="6" cy="6" r="5.3" fill="none" stroke="currentColor" stroke-width="1"/><path d="M3.2 6h5.2M6.2 3.7L8.5 6 6.2 8.3" fill="none" stroke="currentColor" stroke-width="1.15"/></svg>
<div class="abs c" style="left:53px;letter-spacing:-0.181px;">29.03.2021</div>
<div class="abs c" style="left:124px;letter-spacing:-0.289px;">IN</div>
<div class="abs c" style="left:166px;width:75px;text-align:center;">0</div>
<div class="abs c" style="left:241px;width:62px;text-align:center;">0</div>
<div class="abs c" style="left:307px;letter-spacing:-0.042px;">kpl</div>
<div class="abs c" style="left:345px;width:65.5px;text-align:right;transform:scaleX(0.935);transform-origin:100% 0;">0,00</div>
<div class="abs c" style="left:420px;transform:scaleX(0.86);transform-origin:0 0;letter-spacing:-0.206px;">EUR</div>
<div class="abs c" style="left:582px;transform:scaleX(0.86);transform-origin:0 0;letter-spacing:-0.206px;">EUR</div>
<div class="abs c" style="left:716px;letter-spacing:-0.128px;">stock event purchase price / unit</div>
<div class="abs c" style="left:1018px;letter-spacing:-0.25px;">18:40:40</div>
<div class="abs c" style="left:1070px;width:92px;text-align:center;letter-spacing:-0.156px;">14</div>
<div class="abs c" style="left:1162px;width:125px;text-align:center;">0</div>
<div class="abs c" style="left:1291px;letter-spacing:-0.057px;">110000671</div>
</div>
<div class="abs" style="left:1496px;top:26px;width:7px;height:200px;background:#e4e4e4"><i class="abs" style="left:0;top:0;width:7px;height:42px;border-radius:3.5px;background:#a8a8a8"></i></div>
<i class="abs v0" style="left:45px;height:140px"></i>
</div>
</body></html>
